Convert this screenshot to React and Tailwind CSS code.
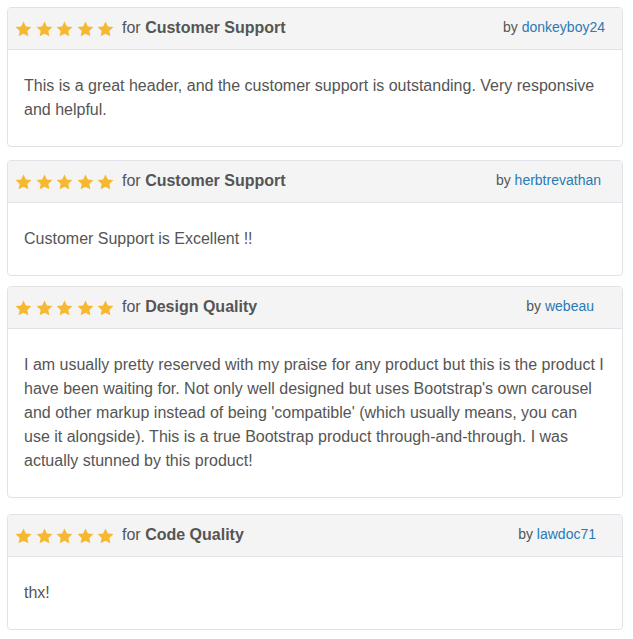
import React from 'react';

const reviews = [
	{
		topic: 'Customer Support',
		author: 'donkeyboy24',
		text: 'This is a great header, and the customer support is outstanding. Very responsive and helpful.',
		mt: 'mt-[7px]',
		pr: 'pr-[17px]',
	},
	{
		topic: 'Customer Support',
		author: 'herbtrevathan',
		text: 'Customer Support is Excellent !!',
		mt: 'mt-[13px]',
		pr: 'pr-[21px]',
	},
	{
		topic: 'Design Quality',
		author: 'webeau',
		text: "I am usually pretty reserved with my praise for any product but this is the product I have been waiting for. Not only well designed but uses Bootstrap's own carousel and other markup instead of being 'compatible' (which usually means, you can use it alongside). This is a true Bootstrap product through-and-through. I was actually stunned by this product!",
		mt: 'mt-[10px]',
		pr: 'pr-[28px]',
	},
	{
		topic: 'Code Quality',
		author: 'lawdoc71',
		text: 'thx!',
		mt: 'mt-[16px]',
		pr: 'pr-[26px]',
	},
];

function Star() {
	return (
		<svg width="17" height="16" viewBox="0 0 24 23" className="block">
			<path
				d="M12 0.6l3.4 7.2 7.9 1-5.8 5.5 1.5 7.8L12 18.3l-7 3.8 1.5-7.8L0.7 8.8l7.9-1z"
				fill="#f6b830"
			/>
		</svg>
	);
}

function ReviewCard({ review }) {
	return (
		<div
			className={`${review.mt} ml-[7px] w-[616px] border border-[#dfe3e8] rounded-[4px] bg-white overflow-hidden`}
		>
			<div
				className={`h-[42px] flex items-center justify-between bg-[#f4f4f4] border-b border-[#dfe3e8] pl-[7px] ${review.pr}`}
			>
				<div className="flex items-center">
					<div className="flex items-center gap-[3.5px]">
						<Star />
						<Star />
						<Star />
						<Star />
						<Star />
					</div>
					<span className="ml-[8px] text-[16px] text-[#555] -mt-[1px]">
						for <b className="font-bold">{review.topic}</b>
					</span>
				</div>
				<span className="text-[14px] text-[#555] -mt-[3px]">
					by <a className="text-[#2a7ab5]">{review.author}</a>
				</span>
			</div>
			<div className="px-4 py-6">
				<p className="text-[16px] leading-[24px] text-[#555]">{review.text}</p>
			</div>
		</div>
	);
}

export default function App() {
	return (
		<div
			className="w-[633px] h-[639px] bg-white"
			style={{ fontFamily: '"Liberation Sans", Arial, sans-serif' }}
		>
			<div className="flex flex-col">
				{reviews.map((r, i) => (
					<ReviewCard key={i} review={r} />
				))}
			</div>
		</div>
	);
}
